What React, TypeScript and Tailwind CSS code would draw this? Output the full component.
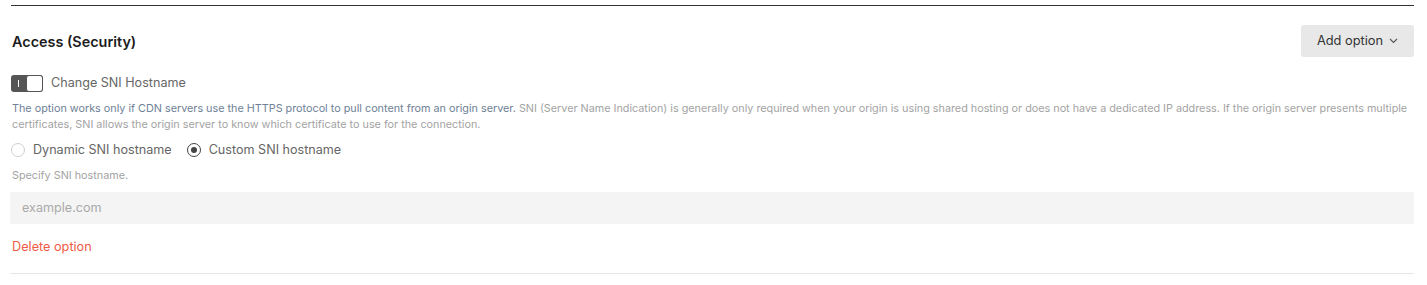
import React from "react";

export default function App() {
  return (
    <div className="w-[1427px] h-[285px] bg-white pl-[10px] pr-[13px] pt-[5px]" style={{ fontFamily: "Inter, 'Noto Sans', sans-serif" }}>
      <div className="h-px bg-[#333333] ml-px" />
      <div className="flex items-center justify-between mt-[19px] h-[32px]">
        <div className="text-[14.4px] font-semibold text-[#1c1c1c] pl-[2px] pt-[2px]">Access (Security)</div>
        <button className="h-[32px] w-[113px] bg-[#e8e8e8] rounded-[3px] flex items-center justify-center gap-[6px] text-[12.8px] text-[#333]">
          <span>Add option</span>
          <svg width="9" height="6" viewBox="0 0 9 6" fill="none"><path d="M1 1l3.5 3.5L8 1" stroke="#555" strokeWidth="1.1" /></svg>
        </button>
      </div>
      <div className="flex items-center mt-[18px] h-[17px] pl-px">
        <div className="w-[32px] h-[17px] rounded-[3px] bg-[#555555] flex items-center relative">
          <div className="w-px h-[7px] bg-white ml-[7px]" />
          <div className="absolute right-0 top-0 w-[17px] h-[17px] bg-white border-[1.5px] border-[#555] rounded-[3px]" />
        </div>
        <span className="ml-[8px] text-[12.6px] text-[#666]">Change SNI Hostname</span>
      </div>
      <p className="mt-[9px] text-[10.8px] leading-[16px] pl-[2px] text-[#a3a3a3]">
        <span className="text-[#6e8196]">The option works only if CDN servers use the HTTPS protocol to pull content from an origin server.</span>{" "}
        SNI (Server Name Indication) is generally only required when your origin is using shared hosting or does not have a dedicated IP address. If the origin server presents multiple certificates, SNI allows the origin server to know which certificate to use for the connection.
      </p>
      <div className="flex items-center mt-[8px] h-[18px] pl-px text-[12.6px] text-[#666]">
        <span className="w-[14px] h-[14px] rounded-full border border-[#cfcfcf] bg-white" />
        <span className="ml-[8px]">Dynamic SNI hostname</span>
        <span className="ml-[15px] w-[14px] h-[14px] rounded-full border-[1.5px] border-[#444] bg-white flex items-center justify-center">
          <span className="w-[6px] h-[6px] rounded-full bg-[#444]" />
        </span>
        <span className="ml-[8px]">Custom SNI hostname</span>
      </div>
      <div className="mt-[9px] text-[10.8px] leading-[16px] text-[#a3a3a3] pl-[2px]">Specify SNI hostname.</div>
      <div className="mt-[8px] h-[32px] bg-[#f4f4f4] rounded-[2px] flex items-center pl-[12px] text-[12.6px] text-[#aaaaaa]">example.com</div>
      <div className="mt-[14px] text-[12.7px] text-[#ef5a46] pl-[2px] leading-[18px]">Delete option</div>
      <div className="mt-[17px] h-px bg-[#e6e6e6]" />
    </div>
  );
}
